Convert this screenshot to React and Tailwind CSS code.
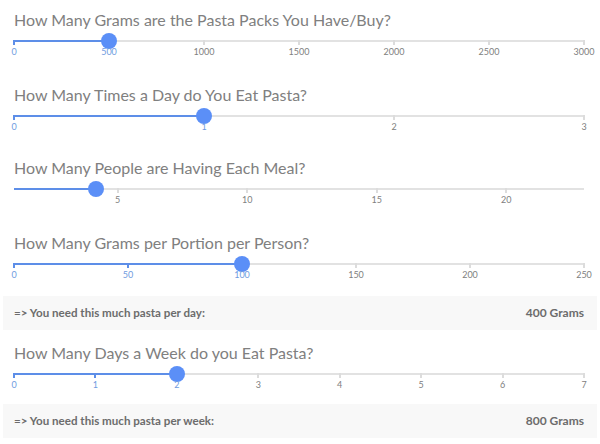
import React from "react";

function Slider({ title, min, max, value, marks, mt }) {
  const pct = (v) => ((v - min) / (max - min)) * 100;
  const p = pct(value);
  return (
    <section className={"flex flex-col " + mt}>
      <h2 className="h-[20px] leading-[20px] text-[16px] font-normal text-[#808080] whitespace-nowrap">{title}</h2>
      <div className="flex flex-col pt-[10px] h-[34px]">
        <div className="relative h-[2px] bg-[#e2e2e2]">
          <div className="h-full bg-[#5d8ee8]" style={{ width: p + "%" }} />
          {marks.map((m) => (
            <div
              key={m}
              className={"absolute top-0 w-[2px] h-[5px] -ml-[1px] " + (m <= value ? "bg-[#5d8ee8]" : "bg-[#dcdcdc]")}
              style={{ left: pct(m) + "%" }}
            />
          ))}
          <div
            className="absolute -top-[7px] w-[16px] h-[16px] -ml-[8px] rounded-full bg-[#5b8ff7]"
            style={{ left: p + "%" }}
          />
        </div>
        <div className="relative mt-[5px] h-[10px]">
          {marks.map((m) => (
            <span
              key={m}
              className={"absolute top-0 w-[40px] -ml-[20px] text-center text-[9px] leading-[10px] " + (m <= value ? "text-[#6f9be0]" : "text-[#808080]")}
              style={{ left: pct(m) + "%" }}
            >
              {m}
            </span>
          ))}
        </div>
      </div>
    </section>
  );
}

function Result({ label, value, mt }) {
  return (
    <div className={"flex items-center justify-between h-[34px] bg-[#f8f8f8] pl-[11px] pr-[13px] " + mt}>
      <span className="text-[11.6px] font-bold text-[#6c6c6c]">{label}</span>
      <span className="text-[12px] font-bold text-[#6c6c6c]">{value}</span>
    </div>
  );
}

export default function App() {
  return (
    <div className="w-[600px] h-[444px] bg-white pt-[10px] px-[3px] font-['Lato',sans-serif] overflow-hidden">
      <div className="flex flex-col pl-[11px] pr-[13px]">
        <Slider
          title="How Many Grams are the Pasta Packs You Have/Buy?"
          min={0}
          max={3000}
          value={500}
          marks={[0, 500, 1000, 1500, 2000, 2500, 3000]}
          mt="mt-0"
        />
        <Slider
          title="How Many Times a Day do You Eat Pasta?"
          min={0}
          max={3}
          value={1}
          marks={[0, 1, 2, 3]}
          mt="mt-[21px]"
        />
        <Slider
          title="How Many People are Having Each Meal?"
          min={1}
          max={23}
          value={4.15}
          marks={[5, 10, 15, 20]}
          mt="mt-[19px]"
        />
        <Slider
          title="How Many Grams per Portion per Person?"
          min={0}
          max={250}
          value={100}
          marks={[0, 50, 100, 150, 200, 250]}
          mt="mt-[21px]"
        />
      </div>
      <Result label="=> You need this much pasta per day:" value="400 Grams" mt="mt-[9px]" />
      <div className="flex flex-col pl-[11px] pr-[13px]">
        <Slider
          title="How Many Days a Week do you Eat Pasta?"
          min={0}
          max={7}
          value={2}
          marks={[0, 1, 2, 3, 4, 5, 6, 7]}
          mt="mt-[13px]"
        />
      </div>
      <Result label="=> You need this much pasta per week:" value="800 Grams" mt="mt-[7px]" />
    </div>
  );
}
